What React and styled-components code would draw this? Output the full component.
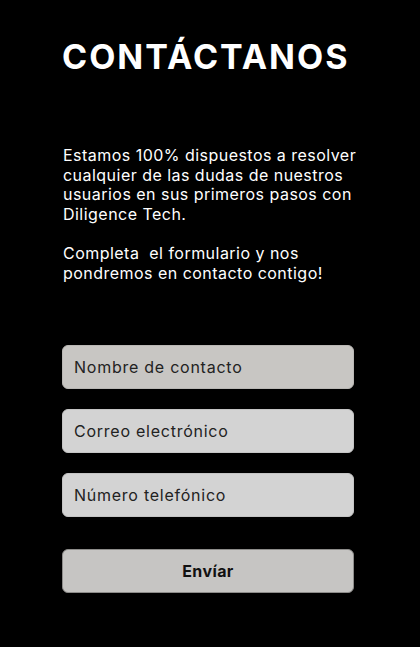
import React from "react";
import styled, { createGlobalStyle } from "styled-components";

const Global = createGlobalStyle`
  html, body { margin: 0; padding: 0; background: #000; }
  body { font-family: "Inter", "Open Sans", sans-serif; }
`;

const Page = styled.main`
  min-height: 647px;
  background: #000;
  padding: 36px 60px 0 62px;
  box-sizing: border-box;
  display: flex;
  flex-direction: column;
`;

const Title = styled.h1`
  margin: 0;
  color: #fff;
  font-family: "Inter", sans-serif;
  font-weight: 700;
  font-size: 34px;
  line-height: 42px;
  letter-spacing: 2px;
`;

const Intro = styled.p`
  margin: 68px 0 0 1px;
  color: #fff;
  font-family: "Inter", sans-serif;
  font-size: 16px;
  line-height: 19.6px;
  letter-spacing: 0.47px;
  white-space: nowrap;
`;

const Form = styled.form`
  margin-top: 62px;
  display: flex;
  flex-direction: column;
  gap: 20px;
`;

const Field = styled.input`
  box-sizing: border-box;
  width: 292px;
  height: 44px;
  border-radius: 6px;
  border: 1px solid ${(p) => (p.$active ? "#b9b7b4" : "#c4c4c4")};
  background: ${(p) => (p.$active ? "#c8c6c3" : "#d3d3d3")};
  padding: 0 11px 1px;
  font-family: "Inter", sans-serif;
  font-size: 16px;
  letter-spacing: 0.75px;
  color: #222;
  outline: none;
  &::placeholder { color: #222; }
`;

const Submit = styled.button`
  box-sizing: border-box;
  margin-top: 12px;
  width: 292px;
  height: 44px;
  border-radius: 6px;
  border: 1px solid #8d8c8a;
  background: #c6c5c3;
  font-family: "Inter", sans-serif;
  font-weight: 700;
  font-size: 16px;
  letter-spacing: 0.4px;
  color: #111;
  cursor: pointer;
`;

export default function App() {
  return (
    <>
      <Global />
      <Page>
        <Title>CONTÁCTANOS</Title>
        <Intro>
          Estamos 100% dispuestos a resolver<br />
          cualquier de las dudas de nuestros<br />
          usuarios en sus primeros pasos con<br />
          Diligence Tech.<br />
          <br />
          Completa&nbsp; el formulario y nos<br />
          pondremos en contacto contigo!
        </Intro>
        <Form onSubmit={(e) => e.preventDefault()}>
          <Field $active placeholder="Nombre de contacto" />
          <Field placeholder="Correo electrónico" />
          <Field placeholder="Número telefónico" />
          <Submit type="submit">Envíar</Submit>
        </Form>
      </Page>
    </>
  );
}
